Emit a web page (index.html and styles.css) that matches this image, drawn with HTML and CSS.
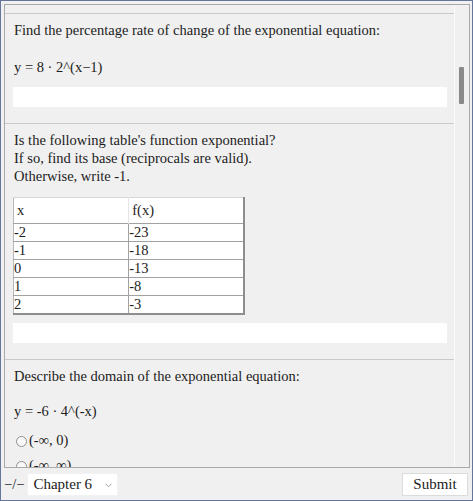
FILE: index.html
```html
<!DOCTYPE html>
<html>
<head>
<meta charset="utf-8">
<link rel="stylesheet" href="styles.css">
</head>
<body>
<div class="window">
  <div class="scrollbox">
    <div class="content">
      <div class="question">
        <p class="line">Find the percentage rate of change of the exponential equation:</p>
        <p class="line eq">y = 8 · 2^(x−1)</p>
        <div class="answer"></div>
      </div>
      <div class="question">
        <p class="line">Is the following table's function exponential?<br>If so, find its base (reciprocals are valid).<br>Otherwise, write -1.</p>
        <table class="data">
          <thead>
            <tr><th>x</th><th>f(x)</th></tr>
          </thead>
          <tbody>
            <tr><td>-2</td><td>-23</td></tr>
            <tr><td>-1</td><td>-18</td></tr>
            <tr><td>0</td><td>-13</td></tr>
            <tr><td>1</td><td>-8</td></tr>
            <tr><td>2</td><td>-3</td></tr>
          </tbody>
        </table>
        <div class="answer answer-table"></div>
      </div>
      <div class="question">
        <p class="line">Describe the domain of the exponential equation:</p>
        <p class="line eq eq-tight">y = -6 · 4^(-x)</p>
        <div class="option"><span class="radio"></span><span>(-∞, 0)</span></div>
        <div class="option"><span class="radio"></span><span>(-∞, ∞)</span></div>
      </div>
    </div>
    <div class="scrollbar"><div class="thumb"></div></div>
  </div>
  <div class="footer">
    <div class="left">
      <span class="score">−/−</span>
      <div class="select"><span>Chapter 6</span><svg class="chev" width="7" height="5" viewBox="0 0 7 5"><polyline points="0.5,0.8 3.5,3.8 6.5,0.8" fill="none" stroke="#a0a0a0" stroke-width="1"/></svg></div>
    </div>
    <div class="submit">Submit</div>
  </div>
</div>
</body>
</html>
```
FILE: styles.css
```css
html, body {
  margin: 0;
  padding: 0;
}
body {
  font-family: "Liberation Serif", "DejaVu Serif", serif;
  font-size: 14.5px;
  line-height: 18px;
  color: #1c1c1c;
  background: #f0f0f0;
}
.window {
  width: 473px;
  height: 501px;
  box-sizing: border-box;
  border: 1px solid #66769a;
  background: #f0f0f0;
  padding: 3px 3px 0 3px;
  display: flex;
  flex-direction: column;
}
.scrollbox {
  width: 466px;
  height: 464px;
  box-sizing: border-box;
  border: 1px solid #a9a9a9;
  display: flex;
  overflow: hidden;
}
.content {
  width: 449px;
  padding-top: 8px;
  overflow: hidden;
}
.question {
  border-top: 1px solid #c9c9c9;
  padding: 7px 7px 16px 8px;
}
.line {
  margin: 0;
  padding-left: 1px;
}
.eq {
  margin-top: 19px;
}
.eq-tight {
  margin-top: 17px;
}
.answer {
  margin-top: 11px;
  height: 20px;
  background: #ffffff;
}
.answer-table {
  margin-top: 8px;
}
.data {
  margin-top: 12px;
  width: 232px;
  border-collapse: collapse;
  background: #ffffff;
  border-top: 1px solid #d6d6d6;
  border-left: 1px solid #b8b8b8;
  border-right: 2px solid #8e8e8e;
  border-bottom: 2px solid #8e8e8e;
  line-height: 17px;
}
.data th {
  font-weight: normal;
  text-align: left;
  height: 25px;
  padding: 0 4px 0 3px;
  width: 50%;
}
.data th + th {
  border-left: 1px solid #e4e4e4;
}
.data td {
  padding: 0;
  height: 17px;
  border-top: 1px solid #a2a2a2;
}
.data td + td {
  border-left: 1px solid #a2a2a2;
}
.option {
  display: flex;
  align-items: center;
  gap: 2px;
  margin-top: 11px;
  height: 18px;
}
.option + .option {
  margin-top: 7px;
}
.radio {
  width: 9px;
  height: 9px;
  border: 1px solid #8f8f8f;
  border-radius: 50%;
  background: #f9f9f9;
  margin-left: 3px;
  margin-top: 2px;
}
.scrollbar {
  width: 14px;
  border-left: 1px solid #fbfbfb;
  background: #f0f0f0;
}
.thumb {
  margin: 62px 0 0 4px;
  width: 5px;
  height: 37px;
  background: #8a8a8a;
  border-radius: 1px;
}
.footer {
  flex: 1;
  display: flex;
  align-items: center;
  justify-content: space-between;
  padding-right: 1px;
}
.left {
  display: flex;
  align-items: center;
  gap: 3px;
}
.score {
  padding-left: 0;
}
.select {
  width: 91px;
  height: 23px;
  box-sizing: border-box;
  background: #ffffff;
  border: 1px solid #f2f2f2;
  display: flex;
  align-items: center;
  justify-content: space-between;
  padding: 0 5px 0 5px;
  font-size: 15px;
}
.chev {
  display: block;
  margin-top: 3px;
}
.submit {
  width: 66px;
  height: 23px;
  box-sizing: border-box;
  background: #ffffff;
  border: 1px solid #dcdcdc;
  display: flex;
  align-items: center;
  justify-content: center;
  font-size: 15px;
}
```
